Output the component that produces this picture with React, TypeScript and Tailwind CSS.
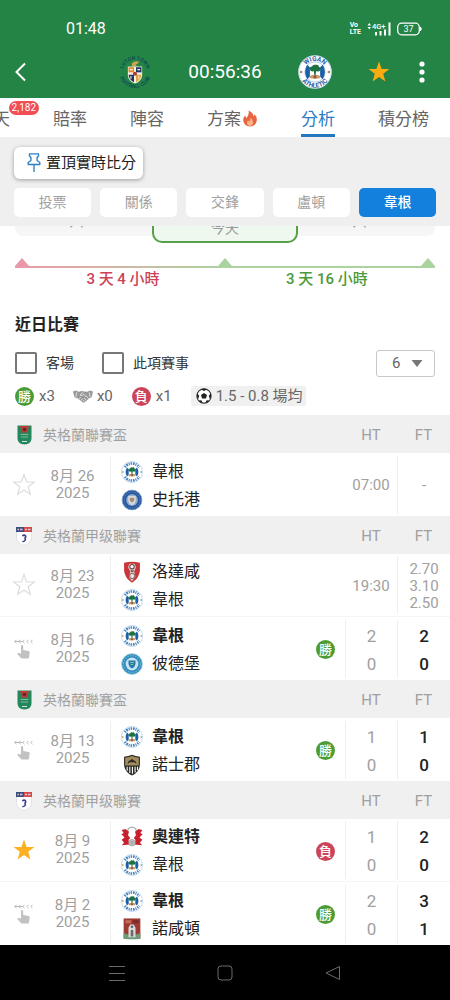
import React from 'react'

type Team = 'wigan' | 'stockport' | 'rotherham' | 'peterborough' | 'notts' | 'orient' | 'northampton'

type Match = {
    day: string
    year: string
    mark: 'none' | 'starred' | 'swipe'
    home: [Team, string]
    away: [Team, string]
    winner?: 'home'
    result?: 'win' | 'loss'
    time?: string
    odds?: string[]
    ht?: [number, number]
    ft?: [number, number]
}

type Group = { league: 'cup' | 'efl'; name: string; matches: Match[] }

const groups: Group[] = [
    {
        league: 'cup',
        name: '英格蘭聯賽盃',
        matches: [
            { day: '8月 26', year: '2025', mark: 'none', home: ['wigan', '韋根'], away: ['stockport', '史托港'], time: '07:00', odds: ['-'] },
        ],
    },
    {
        league: 'efl',
        name: '英格蘭甲级聯賽',
        matches: [
            { day: '8月 23', year: '2025', mark: 'none', home: ['rotherham', '洛達咸'], away: ['wigan', '韋根'], time: '19:30', odds: ['2.70', '3.10', '2.50'] },
            { day: '8月 16', year: '2025', mark: 'swipe', home: ['wigan', '韋根'], away: ['peterborough', '彼德堡'], winner: 'home', result: 'win', ht: [2, 0], ft: [2, 0] },
        ],
    },
    {
        league: 'cup',
        name: '英格蘭聯賽盃',
        matches: [
            { day: '8月 13', year: '2025', mark: 'swipe', home: ['wigan', '韋根'], away: ['notts', '諾士郡'], winner: 'home', result: 'win', ht: [1, 0], ft: [1, 0] },
        ],
    },
    {
        league: 'efl',
        name: '英格蘭甲级聯賽',
        matches: [
            { day: '8月 9', year: '2025', mark: 'starred', home: ['orient', '奧連特'], away: ['wigan', '韋根'], winner: 'home', result: 'loss', ht: [1, 0], ft: [2, 0] },
            { day: '8月 2', year: '2025', mark: 'swipe', home: ['wigan', '韋根'], away: ['northampton', '諾咸頓'], winner: 'home', result: 'win', ht: [2, 0], ft: [3, 1] },
        ],
    },
]

const starPath = 'M12 1.6 L14.6 9 H22.4 L16.2 13.7 L18.4 21.4 L12 16.9 L5.6 21.4 L7.8 13.7 L1.6 9 H9.4 Z'

function WiganArt() {
    return (
        <>
            <path d='M27 29 Q15 50 27 71 L35 64 V36 Z' fill='#1b5fa8' />
            <path d='M73 29 Q85 50 73 71 L65 64 V36 Z' fill='#1b5fa8' />
            <path d='M34 43 Q33 35 41 34 Q44 27 52 29 Q61 27 62 35 Q69 37 66 45 Q60 51 53 47 L52 62 H48 L47 48 Q38 50 34 43 Z' fill='#1d7145' />
            <path d='M34 62 Q50 54 66 62 L63 69 H37 Z' fill='#c99a6a' />
            <path d='M46 60 h8 v9 h-8 Z' fill='#8a5a3a' />
        </>
    )
}

function WiganCrest() {
    return (
        <svg viewBox='0 0 100 100' className='size-[22px] shrink-0'>
            <circle cx='50' cy='50' r='48' fill='#fff' stroke='#a9cbe8' strokeWidth='3' />
            <path d='M18 28 A39 39 0 0 1 82 28' fill='none' stroke='#4a84bf' strokeWidth='12' strokeDasharray='6 4 8 4 5 4' />
            <path d='M18 72 A39 39 0 0 0 82 72' fill='none' stroke='#4a84bf' strokeWidth='12' strokeDasharray='6 4 8 4 5 4' />
            <path d='M5 50 h6 M89 50 h6' stroke='#a98c5c' strokeWidth='6' />
            <WiganArt />
        </svg>
    )
}

function WiganBadge() {
    return (
        <svg viewBox='0 0 100 100' className='size-[34px]'>
            <defs>
                <path id='wigan-top' d='M17 50 A33 33 0 0 1 83 50' />
                <path id='wigan-bottom' d='M4 50 A46 46 0 0 0 96 50' />
            </defs>
            <circle cx='50' cy='50' r='48' fill='#fff' stroke='#c7dcf0' strokeWidth='3' />
            <circle cx='50' cy='50' r='30' fill='#fff' stroke='#8ab6dd' strokeWidth='2' />
            <g fill='#2c5b9c' fontSize='19' fontWeight='700' textAnchor='middle' className='font-[Roboto,sans-serif]'>
                <text><textPath href='#wigan-top' startOffset='50%'>WIGAN</textPath></text>
                <text><textPath href='#wigan-bottom' startOffset='50%'>ATHLETIC</textPath></text>
            </g>
            <circle cx='9' cy='50' r='4' fill='#a98c5c' />
            <circle cx='91' cy='50' r='4' fill='#a98c5c' />
            <WiganArt />
        </svg>
    )
}

function LutonBadge() {
    return (
        <svg viewBox='0 0 100 100' className='size-[34px]'>
            <defs>
                <path id='luton-top' d='M14 50 A36 36 0 0 1 86 50' />
                <path id='luton-bottom' d='M3 50 A47 47 0 0 0 97 50' />
            </defs>
            <g fill='#0e4f55' fontSize='15' fontWeight='700' textAnchor='middle' className='font-[Roboto,sans-serif]'>
                <text><textPath href='#luton-top' startOffset='50%'>LUTON TOWN</textPath></text>
                <text><textPath href='#luton-bottom' startOffset='50%'>FOOTBALL CLUB</textPath></text>
            </g>
            <path d='M40 25 q10 -10 22 -5 q-4 8 -10 8 l4 6 h-14 Z' fill='#c9a54e' />
            <path d='M29 34 H71 V60 Q70 76 50 84 Q30 76 29 60 Z' fill='#f4f1e6' />
            <path d='M31 36 H47 V51 H31 Z' fill='#e58a2c' />
            <path d='M53 36 H69 V51 H53 Z' fill='#26375c' />
            <path d='M31 58 H47 V80 Q33 74 31 58 Z' fill='#26375c' />
            <path d='M53 58 H69 Q67 74 53 80 Z' fill='#e5a13a' />
            <circle cx='50' cy='55' r='6' fill='#a33f3a' />
            <path d='M35 43 h8 M57 43 h8 M38 62 v8 M61 62 v8' stroke='#f4f1e6' strokeWidth='3' />
        </svg>
    )
}

function Crest({ team }: { team: Team }) {
    if (team === 'wigan') return <WiganCrest />
    if (team === 'stockport')
        return (
            <svg viewBox='0 0 100 100' className='size-[22px] shrink-0'>
                <circle cx='50' cy='50' r='45' fill='#24549b' stroke='#7f9dc6' strokeWidth='4' />
                <circle cx='50' cy='50' r='36' fill='none' stroke='#4f7bb8' strokeWidth='6' strokeDasharray='6 4' />
                <circle cx='50' cy='50' r='27' fill='#8fabd0' />
                <path d='M33 32 H67 V54 Q64 68 50 74 Q36 68 33 54 Z' fill='#d9dcdf' />
                <path d='M40 40 h20 v12 l-10 10 l-10 -10 Z' fill='#a98d6d' />
            </svg>
        )
    if (team === 'rotherham')
        return (
            <svg viewBox='0 0 100 100' className='size-[22px] shrink-0'>
                <path d='M14 8 Q50 -2 86 8 V44 Q82 78 50 99 Q18 78 14 44 Z' fill='#c93639' />
                <path d='M38 12 H62 L68 28 L60 48 L66 70 L50 92 L36 74 L42 48 L32 28 Z' fill='#ddd0cc' />
                <circle cx='50' cy='26' r='10' fill='#fff' stroke='#6b4748' strokeWidth='5' />
                <circle cx='51' cy='68' r='12' fill='#e9e4e2' stroke='#6b4748' strokeWidth='4' />
                <path d='M44 42 h14 v8 h-14 Z' fill='#85595a' />
            </svg>
        )
    if (team === 'peterborough')
        return (
            <svg viewBox='0 0 100 100' className='size-[22px] shrink-0'>
                <circle cx='50' cy='50' r='47' fill='#2d88b8' stroke='#8dc4e0' strokeWidth='4' />
                <circle cx='50' cy='50' r='38' fill='none' stroke='#6cb4d8' strokeWidth='6' strokeDasharray='7 5' />
                <circle cx='50' cy='50' r='29' fill='#c7e6f3' />
                <path d='M34 34 H66 V50 Q64 64 50 70 Q36 64 34 50 Z' fill='#2979ab' />
                <path d='M42 43 h16 M44 52 h12' stroke='#9cc9a4' strokeWidth='4' />
            </svg>
        )
    if (team === 'notts')
        return (
            <svg viewBox='0 0 100 100' className='size-[22px] shrink-0'>
                <path d='M14 12 Q34 10 50 3 Q66 10 86 12 V50 Q84 82 50 98 Q16 82 14 50 Z' fill='#2b2925' />
                <path d='M19 17 Q38 15 50 9 Q62 15 81 17 V52 H19 Z' fill='#a08c5c' />
                <path d='M30 44 q2 -16 14 -16 l6 -6 l6 6 q12 0 14 16 l-10 -6 h-20 Z' fill='#2b2925' />
                <path d='M28 58 V76 M40 58 V86 M52 58 V90 M64 58 V84 M75 58 V74' stroke='#fff' strokeWidth='5' />
            </svg>
        )
    if (team === 'orient')
        return (
            <svg viewBox='0 0 100 100' className='size-[22px] shrink-0'>
                <path d='M30 32 Q28 6 50 6 Q72 6 70 32' fill='none' stroke='#b9b9b9' strokeWidth='7' />
                <path d='M3 18 L20 14 L36 26 L32 42 L42 54 L34 64 L40 84 L4 88 L14 76 L3 62 L16 52 L2 38 L12 32 Z' fill='#c8202e' />
                <path d='M97 18 L80 14 L64 26 L68 42 L58 54 L66 64 L60 84 L96 88 L86 76 L97 62 L84 52 L98 38 L88 32 Z' fill='#c8202e' />
                <circle cx='50' cy='76' r='15' fill='#c2c2c2' stroke='#9b9b9b' strokeWidth='3' />
                <path d='M50 66 l8 8 l-4 10 h-8 l-4 -10 Z' fill='#aaa' />
            </svg>
        )
    return (
        <svg viewBox='0 0 100 100' className='size-[22px] shrink-0'>
            <path d='M12 2 H88 V94 H12 Z' fill='#9c3b34' />
            <path d='M12 68 Q50 86 88 68 V94 Q50 100 12 94 Z' fill='#6f9a78' />
            <path d='M20 10 h26 v14 h-26 Z' fill='#c46a58' />
            <path d='M54 10 h26 v14 h-26 Z' fill='#7a2c2c' />
            <path d='M34 88 V44 L42 30 H58 L66 44 V88 Z' fill='#dadbd9' />
            <path d='M44 84 V58 q6 -10 12 0 V84 Z' fill='#6d6a6e' />
            <circle cx='50' cy='40' r='6' fill='#57666f' />
        </svg>
    )
}

function LeagueLogo({ league }: { league: 'cup' | 'efl' }) {
    if (league === 'cup')
        return (
            <svg viewBox='0 0 15 20' className='h-5 w-[15px] shrink-0'>
                <path d='M0.5 0.5 H14.5 V14 Q14 19 7.5 19.5 Q1 19 0.5 14 Z' fill='#23875b' />
                <path d='M3 1 H12 L10 7.5 H5 Z' fill='#c13a36' />
                <circle cx='7.5' cy='4.5' r='1.8' fill='#5e2b29' />
                <path d='M3.5 9.5 h8 M4 12 h7' stroke='#7dbb9c' strokeWidth='1' />
                <path d='M5 16.5 h5' stroke='#fff' strokeWidth='0.8' />
            </svg>
        )
    return (
        <svg viewBox='0 0 16 20' className='h-5 w-4 shrink-0'>
            <path d='M0.5 5.5 H15.5 V13 Q14 18 8 19.5 Q2 18 0.5 13 Z' fill='#fff' stroke='#d3d3dd' strokeWidth='0.6' />
            <path d='M0 1 H8 V6 H0 Z' fill='#3d4f80' />
            <path d='M8 1 H16 V6 H8 Z' fill='#d5484c' />
            <path d='M1.5 3.5 h1.5 M4 3.5 h2.5 M9 3.5 h2 M12 3.5 h2.5' stroke='#d9c6d2' strokeWidth='1.4' />
            <path d='M6.3 10 q2 -1.8 3.2 0 q0.8 2 -1.3 2.3 M9 12 q1.4 2.8 -2.6 3.8' fill='none' stroke='#3c3f8f' strokeWidth='1.6' />
        </svg>
    )
}

function ResultDot({ result }: { result: 'win' | 'loss' }) {
    return (
        <span className={`flex size-[19px] items-center justify-center rounded-full text-[13px] leading-[19px] font-medium text-white ${result === 'win' ? 'bg-[#4c9c35]' : 'bg-[#cb445a]'}`}>
            {result === 'win' ? '勝' : '負'}
        </span>
    )
}

function Mark({ mark }: { mark: Match['mark'] }) {
    if (mark === 'starred')
        return (
            <svg viewBox='0 0 24 24' className='size-6'>
                <path d={starPath} fill='#fdb022' />
            </svg>
        )
    if (mark === 'none')
        return (
            <svg viewBox='0 0 24 24' className='size-6' fill='none' stroke='#dcdcdc' strokeWidth='1.2'>
                <path d={starPath} />
            </svg>
        )
    return (
        <svg viewBox='0 0 20 20' className='size-5'>
            <path d='M2.5 0.8 L0.8 2.5 L2.5 4.2 M6.5 0.8 L4.8 2.5 L6.5 4.2 M10.5 0.8 L8.8 2.5 L10.5 4.2 M14.5 0.8 L12.8 2.5 L14.5 4.2 M18.5 0.8 L16.8 2.5 L18.5 4.2 M0.8 2.5 H9' fill='none' stroke='#b4b4b4' strokeWidth='0.9' />
            <path d='M7 7.2 Q7 6 8.1 6 Q9.2 6 9.2 7.2 V11 L14.6 12 Q15.8 12.4 15.7 13.6 L15 18.4 Q14.7 19.6 13.6 19.6 H8.4 Q7.6 19.6 7 18.9 L3.2 14.9 Q3.6 13.9 4.6 14 L7 14.6 Z' fill='#c2c2c2' />
        </svg>
    )
}

function MatchRow({ match, last }: { match: Match; last: boolean }) {
    const line = last ? '' : 'border-b border-[#f5f5f5]'
    return (
        <tr className='h-[63px]'>
            <td className={line}>
                <button type='button' aria-label='收藏' className='flex w-full items-center justify-center'>
                    <Mark mark={match.mark} />
                </button>
            </td>
            <td className={`${line} pr-[13px] text-center text-[15px] leading-[17px] text-[#a0a0a0]`}>
                {match.day}
                <br />
                {match.year}
            </td>
            <td className={line}>
                <div className='flex h-[58px] items-center justify-between border-l border-[#efefef] pt-[2px] pr-[10px] pl-[10px]'>
                    <div>
                        {[match.home, match.away].map(([team, name], i) => (
                            <div key={i} className='flex h-7 items-center gap-[9px]'>
                                <Crest team={team} />
                                <span className={`text-[16px] leading-7 text-[#222] ${match.winner && i === 0 ? 'font-bold' : ''}`}>{name}</span>
                            </div>
                        ))}
                    </div>
                    {match.result && <ResultDot result={match.result} />}
                </div>
            </td>
            <td className={`${line} text-center text-[#a0a0a0]`}>
                {match.ht ? (
                    <div className='h-[58px] border-l border-[#efefef] pt-[2px] text-[17px] leading-7'>
                        {match.ht[0]}
                        <br />
                        {match.ht[1]}
                    </div>
                ) : (
                    <div className='pt-[2px] text-[15px]'>{match.time}</div>
                )}
            </td>
            <td className={`${line} text-center`}>
                <div className='flex h-[58px] flex-col items-center justify-center border-l border-[#efefef] pt-[2px]'>
                    {match.ft
                        ? match.ft.map((n, i) => <span key={i} className='text-[17px] leading-7 font-medium text-[#222]'>{n}</span>)
                        : match.odds?.map((n) => <span key={n} className='text-[15px] leading-[17px] text-[#a0a0a0]'>{n}</span>)}
                </div>
            </td>
        </tr>
    )
}

function Header() {
    return (
        <header className='bg-[#248446] text-white'>
            <div className='flex h-[42px] items-center justify-between pt-4 pr-7 pl-[66px]'>
                <span className='text-[16px] leading-[26px]'>01:48</span>
                <div className='flex items-center gap-[6px]'>
                    <div className='flex flex-col text-[7px] leading-[7px] font-bold'>
                        <span>Vo</span>
                        <span>LTE</span>
                    </div>
                    <svg viewBox='0 0 24 14' className='h-[14px] w-6' aria-label='4G+'>
                        <path d='M0.5 3.5 L2.3 1 L4 3.5 Z M0.5 5 L2.3 7.5 L4 5 Z' fill='#fff' />
                        <text x='5' y='6.5' fill='#fff' fontSize='7.5' fontWeight='500'>4G+</text>
                        <path d='M8 10 h2 v3.5 h-2 Z M12.5 9 h2 v4.5 h-2 Z M17 7.5 h2 v6 h-2 Z M21.5 0.5 h2 v13 h-2 Z' fill='#fff' />
                    </svg>
                    <svg viewBox='0 0 25 14' className='h-[14px] w-[25px]' aria-label='37%'>
                        <rect x='0.7' y='1.2' width='21.6' height='11.6' rx='4' fill='none' stroke='#fff' strokeWidth='1.3' />
                        <path d='M23.5 5 q1.5 2 0 4 Z' fill='#fff' stroke='#fff' />
                        <text x='11.5' y='10.2' fill='#fff' fontSize='9' textAnchor='middle'>37</text>
                    </svg>
                </div>
            </div>
            <div className='grid h-14 grid-cols-[1fr_auto_1fr] items-center pt-1'>
                <button type='button' aria-label='返回' className='pl-[14px]'>
                    <svg viewBox='0 0 14 20' className='h-5 w-[14px]' fill='none' stroke='#fff' strokeWidth='2'>
                        <path d='M11 1.5 L2.5 10 L11 18.5' />
                    </svg>
                </button>
                <div className='flex items-center gap-9'>
                    <LutonBadge />
                    <span className='text-[19px] leading-6'>00:56:36</span>
                    <WiganBadge />
                </div>
                <div className='flex items-center justify-end gap-7 pr-[25px]'>
                    <button type='button' aria-label='收藏'>
                        <svg viewBox='0 0 24 24' className='size-6'>
                            <path d={starPath} fill='#fcab10' />
                        </svg>
                    </button>
                    <button type='button' aria-label='更多'>
                        <svg viewBox='0 0 6 22' className='h-[22px] w-[6px]' fill='#fff'>
                            <circle cx='3' cy='3' r='2.6' />
                            <circle cx='3' cy='11' r='2.6' />
                            <circle cx='3' cy='19' r='2.6' />
                        </svg>
                    </button>
                </div>
            </div>
        </header>
    )
}

function Tabs() {
    return (
        <nav className='flex h-[39px] justify-end gap-[43px] overflow-hidden bg-white pr-[21px] text-[17px] leading-[42px] whitespace-nowrap text-[#666]'>
            <a href='#chat' className='relative'>
                天
                <span className='absolute top-[3px] right-[-29px] h-[14px] rounded-full bg-[#f34d55] px-[3px] text-[10px] leading-[14px] text-white'>2,182</span>
            </a>
            <a href='#odds'>賠率</a>
            <a href='#lineup'>陣容</a>
            <a href='#tips' className='flex items-start gap-[1px]'>
                方案
                <svg viewBox='0 0 16 18' className='mt-3 h-[17px] w-4'>
                    <path d='M6.5 0.5 Q12 3 11.5 7 Q12.8 6.2 12.8 4.6 Q16 8 15 12 Q13.6 17.5 8 17.5 Q2 17.3 1 12 Q0.4 8.4 3 5.6 Q3.2 7.8 4.4 8.4 Q7.4 5 6.5 0.5 Z' fill='#ea6440' />
                    <path d='M8.6 8 Q11.5 11 11.3 13.4 Q10.8 16.6 8 16.8 Q5 16.6 4.8 13.6 Q4.9 12 6 10.8 Q6.4 12 7.2 12.2 Q8.8 10.6 8.6 8 Z' fill='#f9b48a' />
                </svg>
            </a>
            <a href='#analysis' className='border-b-[3px] border-[#2478bd] text-[#2b7dc4]'>分析</a>
            <a href='#table'>積分榜</a>
        </nav>
    )
}

function Toolbar() {
    const sections = ['投票', '關係', '交鋒', '盧頓', '韋根']
    return (
        <div className='h-[89px] bg-[#efefef] px-[14px] pt-[10px]'>
            <button type='button' className='flex h-8 items-center gap-1 rounded-md bg-white pr-[7px] pl-3 text-[15px] leading-8 text-[#222] shadow-[0_1px_4px_rgba(0,0,0,0.35)]'>
                <svg viewBox='0 0 16 22' className='h-5 w-4' fill='none' stroke='#2b80c5' strokeWidth='1.5' strokeLinejoin='round'>
                    <path d='M3 1 H13 V3.4 L11.4 4.8 V8.2 L14.4 10.4 V12.6 H1.6 V10.4 L4.6 8.2 V4.8 L3 3.4 Z M8 12.6 V21' />
                </svg>
                置頂實時比分
            </button>
            <div className='mt-[9px] grid grid-cols-5 gap-[9px]'>
                {sections.map((name) => (
                    <button
                        key={name}
                        type='button'
                        className={`h-[29px] rounded-[5px] text-[14px] leading-[29px] ${name === '韋根' ? 'bg-[#1280dc] font-medium text-white' : 'bg-white text-[#a0a0a0]'}`}
                    >
                        {name}
                    </button>
                ))}
            </div>
        </div>
    )
}

function Schedule() {
    return (
        <section className='px-[15px]'>
            {/* cards scrolled halfway under the toolbar */}
            <div className='grid grid-cols-[1fr_146px_1fr] items-start text-center text-[14px] leading-5 text-[#999]'>
                <div className='h-[10px] overflow-hidden rounded-bl-lg bg-[#f6f6f6] pr-[14px]'>
                    <p className='-mt-[15px]'>六</p>
                </div>
                <div className='h-[17px] overflow-hidden rounded-b-[10px] border-2 border-t-0 border-[#58a048] bg-[#eff8ee]'>
                    <p className='-mt-2'>今天</p>
                </div>
                <div className='h-[10px] overflow-hidden rounded-br-lg bg-[#f6f6f6] pr-[14px]'>
                    <p className='-mt-[15px]'>六</p>
                </div>
            </div>
            <div className='mt-[15px] flex h-2 items-end justify-between'>
                <svg viewBox='0 0 14 8' className='h-2 w-[14px]'><path d='M0 8 L7 0 L14 8 Z' fill='#e998a8' /></svg>
                <svg viewBox='0 0 14 8' className='h-2 w-[14px]'><path d='M0 8 L7 0 L14 8 Z' fill='#abd3a0' /></svg>
                <svg viewBox='0 0 14 8' className='h-2 w-[14px]'><path d='M0 8 L7 0 L14 8 Z' fill='#abd3a0' /></svg>
            </div>
            <div className='grid h-[2px] grid-cols-2'>
                <div className='bg-gradient-to-r from-[#e998a8] to-[#abd3a0]'></div>
                <div className='bg-[#abd3a0]'></div>
            </div>
            <div className='grid h-[23px] grid-cols-2 px-[6px] text-center text-[15px] leading-[22px] font-medium'>
                <span className='text-[#cc4257]'>3 天 4 小時</span>
                <span className='text-[#4c9a3a]'>3 天 16 小時</span>
            </div>
        </section>
    )
}

function Filters() {
    return (
        <section className='px-[15px]'>
            <h2 className='pt-[22px] text-[16px] leading-6 font-bold text-[#222]'>近日比賽</h2>
            <div className='mt-3 flex h-7 items-center text-[14px] text-[#333]'>
                <input id='away' type='checkbox' className='size-[22px] appearance-none rounded-[2px] border-2 border-[#777]' />
                <label htmlFor='away' className='ml-[9px]'>客場</label>
                <input id='league' type='checkbox' className='ml-7 size-[22px] appearance-none rounded-[2px] border-2 border-[#777]' />
                <label htmlFor='league' className='ml-[9px]'>此項賽事</label>
                <div className='relative ml-auto'>
                    <select aria-label='場數' className='h-[27px] w-[59px] appearance-none rounded-[3px] border border-[#c8c8c8] bg-white pl-[15px] text-[15px] leading-[25px] text-[#666]' defaultValue='6'>
                        <option>6</option>
                        <option>10</option>
                        <option>20</option>
                    </select>
                    <svg viewBox='0 0 12 7' className='pointer-events-none absolute top-[10px] right-3 h-[7px] w-3'><path d='M0.5 0 H11.5 L6 7 Z' fill='#777' /></svg>
                </div>
            </div>
            <div className='mt-[9px] flex h-5 items-center text-[15px] leading-5 text-[#666]'>
                <ResultDot result='win' />
                <span className='ml-[5px]'>x3</span>
                <svg viewBox='0 0 20 13' className='ml-[18px] h-[13px] w-5'>
                    <path d='M0 1.6 L3.2 0.6 L5.4 1.8 L9 1 L11 1.6 L14.6 1.8 L16.8 0.6 L20 1.6 L18.6 7.4 L16.4 8 L12 12 Q10.8 12.9 9.6 12.2 L4.2 8 L1.6 7.4 Z' fill='#999' />
                    <path d='M3.8 2.4 L2.8 7 M16.2 2.4 L17.2 7 M9.6 2.4 L7.2 5.2 Q8.6 6.4 10.6 4.4 L15.4 8 M6 9 L7.6 7.2 M8 10.6 L9.6 8.6 M11 8 L13.2 10 M9.8 9.8 L11.4 11.4' fill='none' stroke='#fff' strokeWidth='0.7' />
                </svg>
                <span className='ml-1'>x0</span>
                <span className='ml-[19px]'><ResultDot result='loss' /></span>
                <span className='ml-[5px]'>x1</span>
                <span className='ml-[19px] flex h-5 items-center gap-1 rounded-[2px] bg-[#f0f0f0] pr-[3px] pl-[5px]'>
                    <svg viewBox='0 0 16 16' className='size-4'>
                        <circle cx='8' cy='8' r='7.1' fill='#fff' stroke='#333' strokeWidth='1.1' />
                        <path d='M8 4.9 L11 7.1 L9.9 10.6 H6.1 L5 7.1 Z M5.2 1.4 L8 3 L10.8 1.4 L8 0.6 Z M1 5.6 L3.2 7.6 L2.4 10.8 L0.9 9 Z M15 5.6 L12.8 7.6 L13.6 10.8 L15.1 9 Z M2.8 12.6 L5.4 12.2 L6.6 15 L4.6 14.4 Z M13.2 12.6 L10.6 12.2 L9.4 15 L11.4 14.4 Z' fill='#222' />
                    </svg>
                    1.5 - 0.8 場均
                </span>
            </div>
        </section>
    )
}

function App() {
    return (
        <div className="flex min-h-screen flex-col bg-white font-[Roboto,'Noto_Sans_CJK_TC',sans-serif]">
            <Header />
            <Tabs />
            <Toolbar />
            <Schedule />
            <Filters />
            <table className='mt-[9px] w-full table-fixed border-separate border-spacing-0'>
                <colgroup>
                    <col className='w-12' />
                    <col className='w-[62px]' />
                    <col />
                    <col className='w-[52px]' />
                    <col className='w-[53px]' />
                </colgroup>
                {groups.map((group, g) => (
                    <tbody key={g}>
                        <tr className='h-[38px] bg-[#f0f0f0] text-[15px] text-[#a0a0a0]'>
                            <th colSpan={3} className='pt-[2px] pl-4 font-normal'>
                                <div className='flex items-center gap-[11px]'>
                                    <span className='flex w-4 justify-center'><LeagueLogo league={group.league} /></span>
                                    <span className='text-[14px] leading-5'>{group.name}</span>
                                </div>
                            </th>
                            <th className='pt-[2px] text-center font-normal'>HT</th>
                            <th className='pt-[2px] text-center font-normal'>FT</th>
                        </tr>
                        {group.matches.map((match, i) => (
                            <MatchRow key={i} match={match} last={i === group.matches.length - 1} />
                        ))}
                    </tbody>
                ))}
            </table>
            <footer className='mt-auto flex h-[55px] items-center justify-center gap-[92px] bg-black'>
                <button type='button' aria-label='最近'>
                    <svg viewBox='0 0 16 16' className='size-4' fill='none' stroke='#6b6b6b'><path d='M0 1.5 H16 M0 8.5 H16 M0 15.5 H16' /></svg>
                </button>
                <button type='button' aria-label='主頁'>
                    <svg viewBox='0 0 16 16' className='size-4' fill='none' stroke='#6b6b6b'><rect x='1' y='1' width='14' height='14' rx='3' /></svg>
                </button>
                <button type='button' aria-label='上一頁'>
                    <svg viewBox='0 0 16 16' className='size-4' fill='none' stroke='#6b6b6b' strokeLinejoin='round'><path d='M14.5 1.5 V14.5 L1 8 Z' /></svg>
                </button>
            </footer>
        </div>
    )
}

export default App
